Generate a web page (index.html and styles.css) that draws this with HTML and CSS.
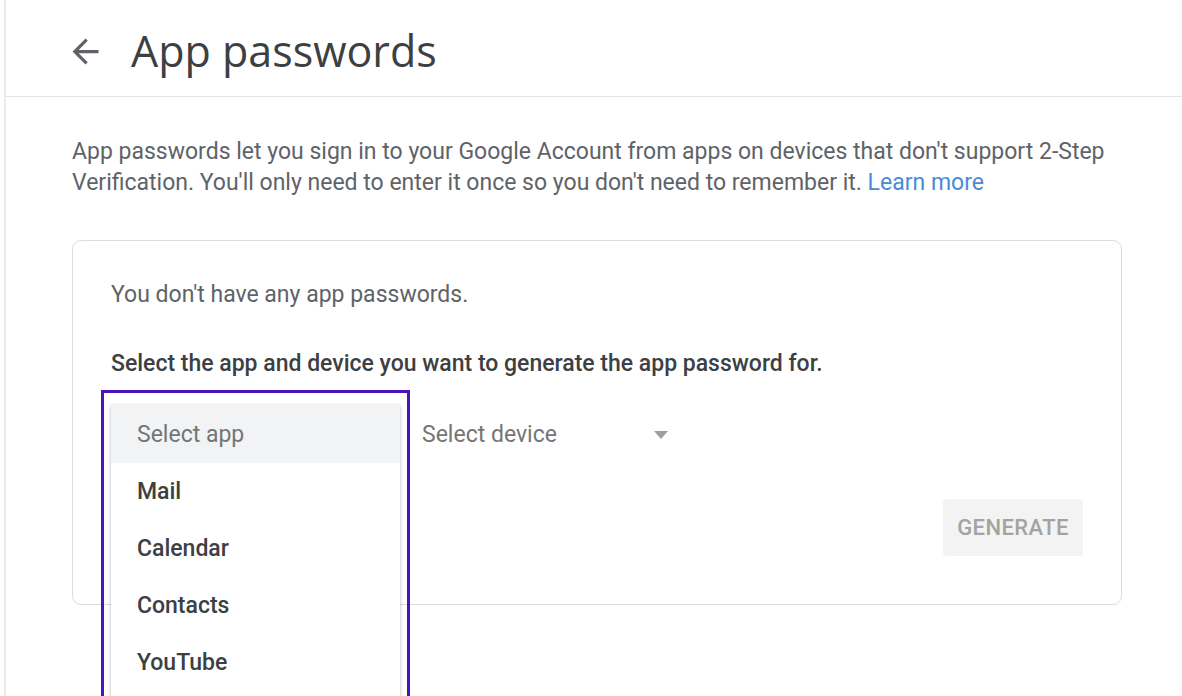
FILE: index.html
```html
<!DOCTYPE html>
<html lang="en">
<head>
<meta charset="utf-8">
<title>App passwords</title>
<link rel="stylesheet" href="styles.css">
</head>
<body>
<div class="page">
  <header class="header">
    <span class="back" aria-label="Back">
      <svg viewBox="0 0 24 24" width="39" height="39"><path d="M20 11H7.83l5.59-5.59L12 4l-8 8 8 8 1.41-1.41L7.83 13H20v-2z" fill="#5f6368"/></svg>
    </span>
    <h1 class="title">App passwords</h1>
  </header>
  <main class="content">
    <p class="intro">App passwords let you sign in to your Google Account from apps on devices that don't support 2-Step Verification. You'll only need to enter it once so you don't need to remember it. <a class="link" href="#">Learn more</a></p>
    <section class="card">
      <p class="empty">You don't have any app passwords.</p>
      <p class="prompt">Select the app and device you want to generate the app password for.</p>
      <div class="selects">
        <div class="select select-app">
          <span class="select-label">Select app</span>
          <div class="menu">
            <div class="highlight"></div>
            <div class="menu-item menu-placeholder">Select app</div>
            <div class="menu-item">Mail</div>
            <div class="menu-item">Calendar</div>
            <div class="menu-item">Contacts</div>
            <div class="menu-item">YouTube</div>
          </div>
        </div>
        <div class="select select-device">
          <span class="select-label">Select device</span>
          <span class="caret"></span>
        </div>
      </div>
      <div class="actions">
        <button class="generate" type="button">GENERATE</button>
      </div>
    </section>
  </main>
</div>
</body>
</html>
```

FILE: styles.css
```css
html, body {
  margin: 0;
  padding: 0;
  height: 100%;
  overflow: hidden;
  background: #ffffff;
}
body {
  font-family: Roboto, "Liberation Sans", Arial, sans-serif;
  padding-left: 4px;
}
.page {
  border-left: 2px solid #ebebeb;
  min-height: 100%;
}
.header {
  display: flex;
  align-items: center;
  height: 97px;
  box-sizing: border-box;
  padding: 0 0 0 60px;
  border-bottom: 1px solid #e3e3e3;
}
.back {
  display: flex;
  width: 39px;
  height: 39px;
  margin-top: 6px;
}
.title {
  margin: 0 0 0 26px;
  font-family: "Open Sans", "Liberation Sans", sans-serif;
  font-weight: 400;
  font-size: 43px;
  line-height: 43px;
  color: #3c4043;
  padding-top: 5px;
}
.content {
  width: 1050px;
  margin-left: 66px;
}
.intro {
  margin: 39px 0 0;
  font-size: 23px;
  line-height: 31px;
  color: #5f6368;
}
.link {
  color: #4a8ad8;
  text-decoration: none;
}
.card {
  margin-top: 42px;
  border: 1px solid #dadce0;
  border-radius: 9px;
  padding: 38px 38px 48px;
}
.empty {
  margin: 0;
  font-size: 23px;
  line-height: 31px;
  color: #5f6368;
}
.prompt {
  margin: 38px 0 0;
  font-size: 23px;
  line-height: 31px;
  font-weight: 500;
  color: #3c4043;
}
.selects {
  display: flex;
  gap: 22px;
  margin-top: 26px;
  height: 58px;
}
.select {
  position: relative;
  display: flex;
  align-items: center;
  font-size: 23px;
  color: #757575;
}
.select-app {
  width: 289px;
  padding-left: 26px;
  box-sizing: border-box;
}
.select-device {
  width: 258px;
  justify-content: space-between;
}
.caret {
  width: 0;
  height: 0;
  border-left: 7px solid transparent;
  border-right: 7px solid transparent;
  border-top: 8px solid #9e9e9e;
  margin-right: 12px;
  margin-top: 2px;
}
.menu {
  position: absolute;
  top: 0;
  left: 0;
  width: 289px;
  padding-bottom: 30px;
  background: #ffffff;
  box-shadow: 0 2px 4px rgba(0, 0, 0, 0.18), 0 0 3px rgba(0, 0, 0, 0.12);
  z-index: 2;
}
.menu-item {
  height: 57px;
  display: flex;
  align-items: center;
  padding-left: 26px;
  font-size: 23px;
  font-weight: 500;
  color: #3c4043;
}
.menu-placeholder {
  height: 58px;
  background: #f1f3f4;
  color: #757575;
  font-weight: 400;
}
.highlight {
  position: absolute;
  top: -15px;
  left: -10px;
  right: -10px;
  bottom: -20px;
  border: 3px solid #4b14b9;
  pointer-events: none;
}
.actions {
  display: flex;
  justify-content: flex-end;
  margin-top: 36px;
}
.generate {
  width: 140px;
  height: 57px;
  border: none;
  border-radius: 4px;
  background: #f3f3f3;
  font-family: Roboto, "Liberation Sans", sans-serif;
  font-size: 22px;
  font-weight: 500;
  letter-spacing: 0.4px;
  color: #a3a3a3;
  padding: 0;
}
```
